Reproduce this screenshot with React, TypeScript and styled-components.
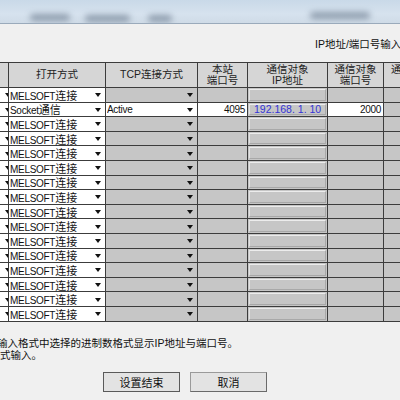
import React from "react";
import styled, { createGlobalStyle } from "styled-components";

const GlobalStyle = createGlobalStyle`
  html, body {
    margin: 0;
    padding: 0;
    background: #f0f0f0;
  }
  body {
    font-family: "Liberation Sans", "Noto Sans CJK SC", sans-serif;
  }
`;

const Window = styled.div`
  width: 400px;
  height: 400px;
  overflow: hidden;
  display: flex;
  flex-direction: column;
  background: #f0f0f0;
`;

const TitleBar = styled.div`
  height: 23px;
  flex: none;
  position: relative;
  overflow: hidden;
  background: linear-gradient(180deg, #c9d9e8 0%, #d6e2ee 60%, #cfdbe7 100%);
  border-bottom: 1px solid #9aaabb;
`;

const Smudge = styled.div<{ $l: number; $w: number; $t: number }>`
  position: absolute;
  left: ${(p) => p.$l}px;
  width: ${(p) => p.$w}px;
  top: ${(p) => p.$t}px;
  height: 7px;
  border-radius: 4px;
  background: #6f7f92;
  filter: blur(3px);
  opacity: 0.7;
`;

const Hint = styled.div`
  height: 38px;
  flex: none;
  padding-left: 315px;
  display: flex;
  align-items: center;
  white-space: nowrap;
  font-size: 10.5px;
  color: #111;
`;

const Grid = styled.div`
  flex: none;
  display: grid;
  grid-template-columns: 8px 96px 91px 49px 79px 55px 56px;
  grid-template-rows: 24px repeat(16, 13.6px);
  gap: 1px;
  background: #3c3c3c;
  border-top: 1px solid #3c3c3c;
  border-bottom: 1px solid #3c3c3c;
  width: 442px;
`;

const Head = styled.div`
  background: #d6d6d6;
  display: flex;
  align-items: center;
  justify-content: center;
  text-align: center;
  font-size: 10.5px;
  line-height: 11.5px;
  color: #222;
  white-space: pre;
  overflow: hidden;
`;

const Cell = styled.div<{ $white?: boolean; $right?: boolean }>`
  background: ${(p) => (p.$white ? "#ffffff" : "#c6c6c6")};
  display: flex;
  align-items: center;
  justify-content: ${(p) => (p.$right ? "flex-end" : "flex-start")};
  padding: 0 ${(p) => (p.$right ? "2px" : "1px")};
  font-size: 10px;
  letter-spacing: -0.3px;
  color: #111;
  overflow: hidden;
  white-space: nowrap;
`;

const DropCell = styled(Cell)`
  padding-right: 0;
`;

const DropText = styled.span`
  flex: 1;
  overflow: hidden;
`;

const Wide = styled.span`
  font-size: 11px;
  letter-spacing: 0;
`;

const ArrowBox = styled.span`
  width: 14px;
  height: 100%;
  flex: none;
  display: flex;
  align-items: center;
  justify-content: center;
`;

const Arrow = styled.span`
  width: 0;
  height: 0;
  border-left: 3.5px solid transparent;
  border-right: 3.5px solid transparent;
  border-top: 4px solid #111;
  margin-top: 1px;
`;

const IpCell = styled.div`
  background: #c6c6c6;
  padding: 1px;
  display: flex;
`;

const IpField = styled.div`
  flex: 1;
  box-sizing: border-box;
  border-top: 1px solid #ececec;
  border-left: 1px solid #e2e2e2;
  border-bottom: 1px solid #a8a8a8;
  border-right: 1px solid #a8a8a8;
  background: #c6c6c6;
  display: flex;
  align-items: center;
  padding-left: 4px;
  font-size: 10.5px;
  color: #3434d6;
  white-space: pre;
  overflow: hidden;
`;

const Note = styled.div`
  margin-top: 15px;
  font-size: 10.5px;
  line-height: 12px;
  color: #111;
  white-space: nowrap;
  text-indent: -3px;
`;

const Buttons = styled.div`
  display: flex;
  gap: 10px;
  padding-left: 103px;
  margin-top: 11px;
`;

const Button = styled.button<{ $primary?: boolean }>`
  width: 77px;
  height: 20px;
  box-sizing: border-box;
  background: #e3e3e3;
  border: 1px solid #9a9a9a;
  border-right-color: ${(p) => (p.$primary ? "#3a3a3a" : "#6a6a6a")};
  border-bottom-color: ${(p) => (p.$primary ? "#3a3a3a" : "#6a6a6a")};
  outline: ${(p) => (p.$primary ? "1px solid #5a5a5a" : "none")};
  outline-offset: -1px;
  font-family: "Liberation Sans", "Noto Sans CJK SC", sans-serif;
  font-size: 11px;
  color: #111;
  padding: 0;
`;

const Drop = ({
  text,
  cjk,
  white,
}: {
  text?: string;
  cjk?: string;
  white?: boolean;
}) => (
  <DropCell $white={white}>
    <DropText>
      {text}
      {cjk && <Wide>{cjk}</Wide>}
    </DropText>
    <ArrowBox>
      <Arrow />
    </ArrowBox>
  </DropCell>
);

const headers = [
  "",
  "打开方式",
  "TCP连接方式",
  "本站\n端口号",
  "通信对象\nIP地址",
  "通信对象\n端口号",
  "通信对象\n协议",
];

const rows = Array.from({ length: 16 }, (_, i) => i);

const App = () => {
  return (
    <Window>
      <GlobalStyle />
      <TitleBar>
        <Smudge $l={30} $w={40} $t={14} />
        <Smudge $l={85} $w={45} $t={15} />
        <Smudge $l={148} $w={24} $t={15} />
        <Smudge $l={310} $w={60} $t={12} />
      </TitleBar>
      <Hint>IP地址/端口号输入设置</Hint>
      <Grid>
        {headers.map((h, i) => (
          <Head key={i}>{h}</Head>
        ))}
        {rows.map((i) =>
          i === 1 ? (
            <React.Fragment key={i}>
              <Drop white />
              <Drop white text="Socket" cjk="通信" />
              <Drop white text="Active" />
              <Cell $white $right>
                4095
              </Cell>
              <IpCell>
                <IpField>192.168. 1. 10</IpField>
              </IpCell>
              <Cell $white $right>
                2000
              </Cell>
              <Cell />
            </React.Fragment>
          ) : (
            <React.Fragment key={i}>
              <Drop white />
              <Drop white text="MELSOFT" cjk="连接" />
              <Drop />
              <Cell />
              <IpCell>
                <IpField />
              </IpCell>
              <Cell />
              <Cell />
            </React.Fragment>
          )
        )}
      </Grid>
      <Note>
        输入格式中选择的进制数格式显示IP地址与端口号。
        <br />
        式输入。
      </Note>
      <Buttons>
        <Button $primary>设置结束</Button>
        <Button>取消</Button>
      </Buttons>
    </Window>
  );
};

export default App;
